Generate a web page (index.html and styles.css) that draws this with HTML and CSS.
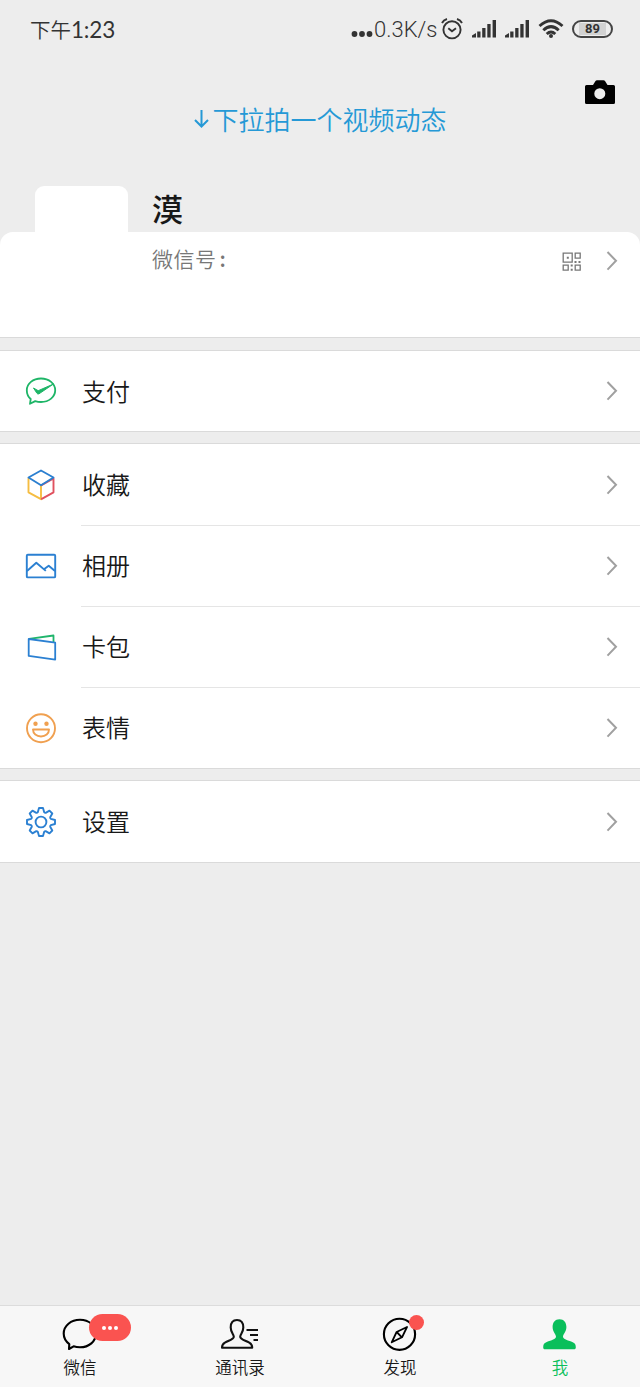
FILE: index.html
```html
<!DOCTYPE html>
<html lang="zh-CN">
<head>
<meta charset="utf-8">
<title>我</title>
<link rel="stylesheet" href="styles.css">
</head>
<body>
<svg class="defs" aria-hidden="true">
  <symbol id="chevron" viewBox="0 0 12 20"><path d="M1.500 1 10 9.800l-8.500 8.800" fill="none" stroke="#a0a0a0" stroke-width="2"/></symbol>
  <symbol id="signal" viewBox="0 0 24 18"><path d="M0 17.500v-2l4-2.500v4.500zM5.200 11.500h3.300v6H5.200zM10.200 8h3.300v9.500h-3.300zM15.300 4h3.300v13.500h-3.300zM20.600 0h3.400v17.500h-3.400z" fill="#333"/></symbol>
</svg>
<div class="screen">
  <header class="status">
    <span class="clock">下午<span class="digits">1:23</span></span>
    <div class="status-right">
      <svg class="dots" width="22" height="8" viewBox="0 0 22 8"><g fill="#333"><circle cx="3.500" cy="4" r="2.900"/><circle cx="11" cy="4" r="2.900"/><circle cx="18.500" cy="4" r="2.900"/></g></svg>
      <span class="speed">0.3K/s</span>
      <svg class="alarm" width="22" height="22" viewBox="0 0 22 22" fill="none" stroke="#333" stroke-width="1.900"><circle cx="11" cy="11.800" r="8.600"/><path d="m7.300 10.300 3.700 3 4-3M1 5Q2.500 2 6 1M21 5Q19.500 2 16 1"/></svg>
      <svg class="signal" width="24" height="18"><use href="#signal"/></svg>
      <svg class="signal" width="24" height="18"><use href="#signal"/></svg>
      <svg class="wifi" width="26" height="20" viewBox="0 0 26 20" fill="none" stroke="#333" stroke-width="2.900"><path d="M1.500 7Q13-3.500 24.500 7M5.300 11.300Q13 4 20.700 11.300M8.700 15Q13 11 17.300 15"/><circle cx="13" cy="17" r="2" fill="#333" stroke="none"/></svg>
      <span class="battery"><span class="charge">89</span></span>
    </div>
  </header>

  <section class="pull">
    <p class="hint"><svg width="15" height="20" viewBox="0 0 15 20" fill="none" stroke="#2599d6" stroke-width="2"><path d="M7.500 1v17M1 11l6.500 6.500L14 11"/></svg><span>下拉拍一个视频动态</span></p>
    <svg class="camera" width="30" height="25" viewBox="0 0 30 25"><path fill-rule="evenodd" d="M1.500 5H8l2.500-4q.5-.8 1.500-.8h6.500q1 0 1.500.8l2.500 4h6q1.500 0 1.500 1.500v16q0 1.500-1.500 1.500h-27Q0 24 0 22.500v-16Q0 5 1.500 5zm13.300 3.200a5.500 5.500 0 1 0 0 11 5.500 5.500 0 0 0 0-11z"/></svg>
  </section>

  <section class="profile">
    <div class="avatar"></div>
    <h1 class="name">漠</h1>
    <div class="card">
      <span class="account">微信号<span class="colon">:</span></span>
      <svg class="qr" width="20" height="20" viewBox="0 0 20 20"><g fill="none" stroke="#777" stroke-width="1.300"><path d="M1.200 1.200h9v9h-9zM13.200 1.200h5v5h-5zM1.200 13.200h5v5h-5zM13.200 13.200h5v5h-5z"/></g><path fill="#777" d="M4.800 4.800h2v2h-2zM12.500 9h2v2h-2zM16.500 9h2v2h-2zM8.700 12.500h2v2h-2zM8.700 16.800h2v2h-2z"/></svg>
      <svg class="chevron" width="12" height="20"><use href="#chevron"/></svg>
    </div>
  </section>

  <main class="menu">
    <div class="group">
      <a class="row"><span class="icon"><svg width="34" height="34" viewBox="0 0 34 34" fill="none" stroke="#1eb567" stroke-width="1.800" stroke-linejoin="round"><path d="M17 4.500c8 0 14.200 5 14.200 11.700S25 28 17 28q-3 0-5.800-.9L6 29.800l.7-4.800C4.200 22.800 2.800 19.700 2.800 16.200 2.800 9.500 9 4.500 17 4.500z"/><path d="m9.500 14 4.700 2.700L29.500 10 15 19.800q-1.300.7-2.200-.7z" fill="#1eb567" stroke-width="1"/></svg></span><span class="label">支付</span><svg class="chevron" width="12" height="20"><use href="#chevron"/></svg></a>
    </div>
    <div class="group">
      <a class="row"><span class="icon"><svg width="34" height="34" viewBox="0 0 34 34" fill="none" stroke-width="1.900" stroke-linejoin="round" stroke-linecap="round"><path stroke="#f5bd42" d="M4.500 10.500v13.800L17 31.200V17.500"/><path stroke="#e0525f" d="M17.800 30.800 29.500 24.300V10.500L18 17"/><path stroke="#2b7fd0" d="M4.500 9.500 17 2.500l12.500 7L17 17.200z"/></svg></span><span class="label">收藏</span><svg class="chevron" width="12" height="20"><use href="#chevron"/></svg></a>
      <a class="row"><span class="icon"><svg width="34" height="34" viewBox="0 0 34 34" fill="none" stroke="#2b80d2" stroke-width="1.900" stroke-linejoin="round"><rect x="2.800" y="5.800" width="28.400" height="22.600" rx="1"/><path d="m3 22 9.300-8.300 9.500 8.200M20 20.300l4.700-3.600L31 22"/></svg></span><span class="label">相册</span><svg class="chevron" width="12" height="20"><use href="#chevron"/></svg></a>
      <a class="row"><span class="icon"><svg width="34" height="34" viewBox="0 0 34 34" fill="none" stroke-width="1.800" stroke-linejoin="round"><path stroke="#20b56c" d="M5 8.900 29.500 5.500v6.500"/><path stroke="#2b80d2" d="m4.700 9 26.500 3.700v16.900L4.700 25.900z"/></svg></span><span class="label">卡包</span><svg class="chevron" width="12" height="20"><use href="#chevron"/></svg></a>
      <a class="row"><span class="icon"><svg width="34" height="34" viewBox="0 0 34 34" fill="none" stroke="#f0a050" stroke-width="1.900" stroke-linejoin="round"><circle cx="17" cy="17.300" r="14"/><path d="M9 18.500h16c0 4.200-3.500 7-8 7s-8-2.800-8-7z"/><g fill="#f0a050" stroke="none"><circle cx="11.500" cy="12.800" r="2.200"/><circle cx="22.500" cy="12.800" r="2.200"/></g></svg></span><span class="label">表情</span><svg class="chevron" width="12" height="20"><use href="#chevron"/></svg></a>
    </div>
    <div class="group">
      <a class="row"><span class="icon"><svg width="34" height="34" viewBox="-17 -17 34 34" fill="none" stroke="#2b80d2" stroke-width="1.900" stroke-linejoin="round"><circle r="5.400"/><path d="M-3.200-9.800-2-14H2L3.200-9.800Q3.900-8.900 4.700-9.200L8.500-11.300 11.300-8.500 9.200-4.700Q8.900-3.900 9.800-3.200L14-2V2L9.800 3.200Q8.900 3.900 9.200 4.700L11.300 8.500 8.500 11.300 4.700 9.200Q3.900 8.900 3.200 9.800L2 14H-2L-3.200 9.800Q-3.900 8.900-4.700 9.200L-8.500 11.300-11.300 8.500-9.200 4.700Q-8.900 3.900-9.800 3.200L-14 2V-2L-9.800-3.200Q-8.900-3.900-9.200-4.700L-11.300-8.500-8.500-11.300-4.700-9.200Q-3.900-8.900-3.200-9.800z"/></svg></span><span class="label">设置</span><svg class="chevron" width="12" height="20"><use href="#chevron"/></svg></a>
    </div>
  </main>

  <nav class="tabs">
    <a class="tab"><span class="tab-icon"><svg width="40" height="36" viewBox="0 0 40 36" fill="none" stroke="#000" stroke-width="2.100" stroke-linejoin="round"><path d="M20 3.800c9 0 16 6 16 13.800s-7 13.700-16 13.700q-3.600 0-6.400-1L9 33l.3-4.900C5.700 25.500 3.700 21.800 3.700 17.600 3.700 9.800 11 3.800 20 3.800z"/></svg><span class="badge"><i></i><i></i><i></i></span></span><span>微信</span></a>
    <a class="tab"><span class="tab-icon"><svg width="40" height="36" viewBox="0 0 40 36" fill="none" stroke="#111" stroke-width="2.100" stroke-linejoin="round"><path d="M17 4c4.200 0 6.300 3 6.300 7.500 0 4.800-3.100 6.800-3.100 9.200 0 2.600 4.600 3.500 9.100 6 2.500 1.400 2.900 2.300 2.900 5.100H2c0-2.800.4-3.700 2.900-5.100 4.500-2.500 8.900-3.400 8.900-6 0-2.400-3.100-4.400-3.100-9.200C10.700 7 12.800 4 17 4zM26.500 14H38M30 19h8M33.500 24H38"/></svg></span><span>通讯录</span></a>
    <a class="tab"><span class="tab-icon"><svg width="40" height="36" viewBox="0 0 40 36" fill="none" stroke="#000" stroke-width="2.100" stroke-linejoin="round"><circle cx="19.500" cy="18.300" r="15.600"/><path stroke-width="1.800" d="M27 11l-5 10.300-10.300 5 4.900-10.300zM16.700 16l5.200 5.300"/></svg><span class="dot"></span></span><span>发现</span></a>
    <a class="tab active"><span class="tab-icon"><svg width="40" height="36" viewBox="0 0 40 36" fill="#0abf5b"><path d="M19.500 3.300c4.500 0 6.900 3.200 6.900 7.800 0 4.900-3.400 7.200-3.400 9.500 0 2.900 4.500 3.500 9.300 5.500 2.800 1.300 3.500 2.500 3.500 5.100 0 1.500-.5 2-2 2H5.200c-1.500 0-2-.5-2-2 0-2.600.7-3.800 3.500-5.100 4.800-2 9.300-2.600 9.300-5.500 0-2.300-3.400-4.600-3.400-9.500C12.600 6.500 15 3.300 19.500 3.300z"/></svg></span><span>我</span></a>
  </nav>
</div>
</body>
</html>
```
FILE: styles.css
```css
* { box-sizing: border-box; }
body {
  margin: 0;
  background: #ededed;
  color: #181818;
  font-family: Roboto, "Noto Sans CJK SC", sans-serif;
}
svg { display: block; flex: none; }
.defs { display: none; }
.screen { display: flex; flex-direction: column; height: 1387px; }

.status {
  display: flex;
  justify-content: space-between;
  height: 58px;
  padding: 0 27px 0 30px;
  align-items: center;
  color: #333;
}
.clock { font: 350 20.500px/30px "Noto Sans CJK SC", sans-serif; }
.digits { font-family: Lato, sans-serif; font-weight: 400; font-size: 22.500px; letter-spacing: -.2px; }
.status-right { display: flex; align-items: center; }
.dots { margin-top: 10px; }
.speed { width: 67px; font-size: 22px; line-height: 30px; font-weight: 300; margin: 2px 0 0 1px; white-space: nowrap; }
.alarm { margin: 0 9px 1px 0; }
.signal { margin-right: 9px; }
.wifi { margin: 0 8px 1px 0; }
.battery {
  width: 41px;
  height: 18px;
  padding: 1px 5px;
  border: 2px solid #444;
  border-radius: 9px;
}
.charge { display: block; background: #d2d2d2; font: 700 13px/12px Roboto, sans-serif; text-align: center; }

.pull { position: relative; height: 128px; }
.hint {
  display: flex;
  align-items: center;
  justify-content: center;
  gap: 3px;
  margin: 0;
  padding: 42px 0 0 1px;
  color: #2599d6;
  font: 350 26px/38px "Noto Sans CJK SC", sans-serif;
}
.camera { position: absolute; right: 25px; top: 22px; }

.profile { position: relative; }
.avatar { position: absolute; left: 35px; top: 0; width: 93px; height: 93px; border-radius: 9px; background: #fff; }
.name { height: 46px; margin: 0; padding-left: 152px; font: 500 31px/44px "Noto Sans CJK SC", sans-serif; }
.card {
  display: flex;
  align-items: flex-start;
  height: 106px;
  padding: 13px 22px 0 152px;
  border-bottom: 1px solid #dadada;
  border-radius: 13px 13px 0 0;
  background: #fff;
}
.account { flex: 1; color: #777; font: 350 21px/27px "Noto Sans CJK SC", sans-serif; letter-spacing: .5px; }
.colon { margin-left: 3px; font-weight: 500; }
.qr { margin: 7px 24px 0 0; }
.card .chevron { margin-top: 6px; }

.menu { flex: 1; }
.group { margin-top: 12px; border: solid #dadada; border-width: 1px 0; background: #fff; }
.group:first-child .row { height: 80px; }
.group + .group { margin-top: 11px; }
.row { display: flex; align-items: center; height: 81px; padding: 0 22px 0 24px; }
.row + .row { background: linear-gradient(#e5e5e5, #e5e5e5) 81px 0 / 100% 1px no-repeat; }
.icon { width: 58px; }
.label { flex: 1; padding-bottom: 1px; font: 350 24px/36px "Noto Sans CJK SC", sans-serif; }

.tabs { display: grid; grid-template-columns: repeat(4, 1fr); height: 82px; border-top: 1px solid #dcdcdc; background: #f7f7f7; }
.tab { display: flex; flex-direction: column; align-items: center; padding-top: 10px; font: 350 16.500px/24px "Noto Sans CJK SC", sans-serif; }
.tab-icon { position: relative; height: 39px; }
.active { color: #0abf5b; }
.badge {
  position: absolute;
  left: 29px;
  top: -2px;
  display: flex;
  align-items: center;
  justify-content: center;
  gap: 2px;
  width: 42px;
  height: 27px;
  border-radius: 14px;
  background: #fa5350;
}
.badge i { width: 4px; height: 4px; border-radius: 50%; background: #fff; }
.dot { position: absolute; left: 29px; top: -1px; width: 15px; height: 15px; border-radius: 50%; background: #fa5350; }
```
